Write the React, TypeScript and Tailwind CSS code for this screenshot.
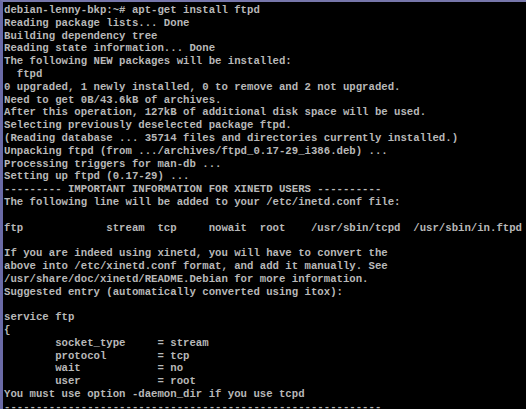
const lines: string[] = [
  "debian-lenny-bkp:~# apt-get install ftpd",
  "Reading package lists... Done",
  "Building dependency tree",
  "Reading state information... Done",
  "The following NEW packages will be installed:",
  "  ftpd",
  "0 upgraded, 1 newly installed, 0 to remove and 2 not upgraded.",
  "Need to get 0B/43.6kB of archives.",
  "After this operation, 127kB of additional disk space will be used.",
  "Selecting previously deselected package ftpd.",
  "(Reading database ... 35714 files and directories currently installed.)",
  "Unpacking ftpd (from .../archives/ftpd_0.17-29_i386.deb) ...",
  "Processing triggers for man-db ...",
  "Setting up ftpd (0.17-29) ...",
  "--------- IMPORTANT INFORMATION FOR XINETD USERS ----------",
  "The following line will be added to your /etc/inetd.conf file:",
  "",
  "ftp             stream  tcp     nowait  root    /usr/sbin/tcpd  /usr/sbin/in.ftpd",
  "",
  "If you are indeed using xinetd, you will have to convert the",
  "above into /etc/xinetd.conf format, and add it manually. See",
  "/usr/share/doc/xinetd/README.Debian for more information.",
  "Suggested entry (automatically converted using itox):",
  "",
  "service ftp",
  "{",
  "        socket_type     = stream",
  "        protocol        = tcp",
  "        wait            = no",
  "        user            = root",
  "You must use option -daemon_dir if you use tcpd",
  "-----------------------------------------------------------",
];

const App = () => {
  return (
    <div className="w-[526px] h-[409px] overflow-hidden bg-black border-t-2 border-l-[3px] border-t-[#7676aa] border-l-[#6a6aa6]">
      <pre className="pl-px pt-[2px] m-0 font-['Liberation_Mono',monospace] font-bold text-[10.667px] leading-[12.8px] text-[#b8b8b8] whitespace-pre">
        {lines.map((line, i) => (
          <div key={i} className="h-[12.8px]">
            {line}
          </div>
        ))}
      </pre>
    </div>
  );
};

export default App;
